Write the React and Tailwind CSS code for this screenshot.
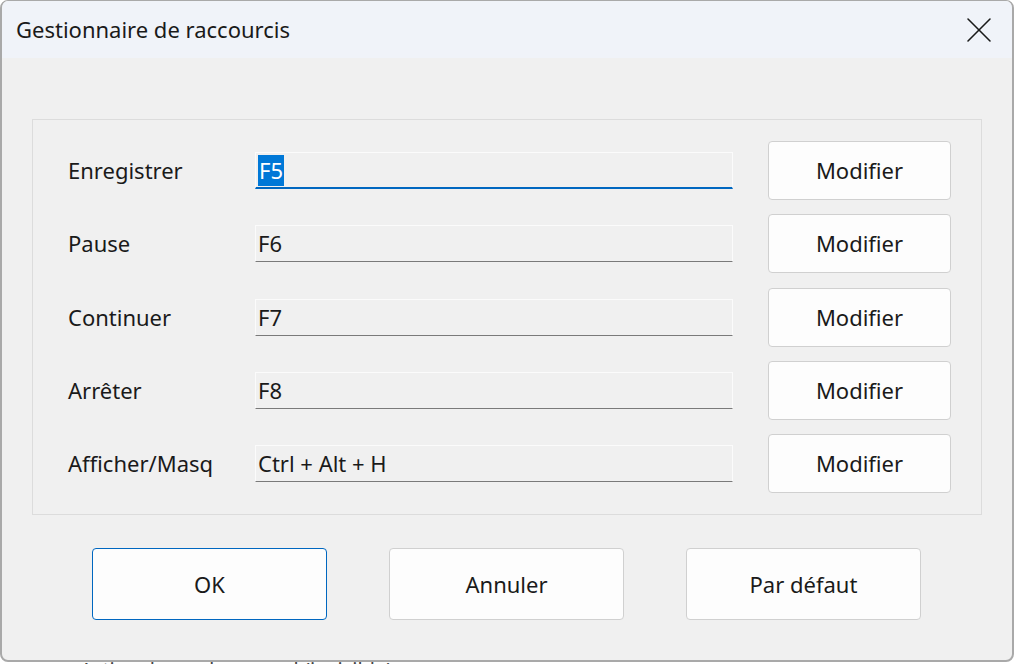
import { X } from "lucide-react";

const shortcuts = [
  { label: "Enregistrer", keys: "F5", focused: true },
  { label: "Pause", keys: "F6" },
  { label: "Continuer", keys: "F7" },
  { label: "Arrêter", keys: "F8" },
  { label: "Afficher/Masq", keys: "Ctrl + Alt + H" },
];

function ShortcutRow({ label, keys, focused }) {
  return (
    <div className="flex items-center h-[59px]">
      <div className="w-[222px] pl-[35px] text-[22px] text-[#1a1a1a]">{label}</div>
      <div
        className={
          "w-[478px] h-[37px] flex items-center pl-[2px] border border-[#fbfbfb] " +
          (focused ? "border-b-2 border-b-[#0067c0]" : "border-b-[#7a7a7a]")
        }
      >
        {focused ? (
          <span className="bg-[#0078d7] text-white text-[22px] leading-[31px] px-[1px]">{keys}</span>
        ) : (
          <span className="text-[22px] text-[#1a1a1a]">{keys}</span>
        )}
      </div>
      <button className="ml-[35px] w-[183px] h-[59px] rounded-[4px] border border-[#d0d0d0] bg-[#fdfdfd] text-[22px] text-[#1a1a1a]">
        Modifier
      </button>
    </div>
  );
}

export default function App() {
  return (
    <div
      className="w-[1014px] h-[664px] bg-white overflow-hidden relative"
      style={{ fontFamily: '"Noto Sans", "Open Sans", sans-serif' }}
    >
      <div className="h-[662px] rounded-[8px] border-x-2 border-t border-b-2 border-[#a9a9a9] bg-[#f0f0f0] flex flex-col overflow-hidden">
        {/* barre de titre */}
        <div className="h-[57px] bg-[#f0f3f9] flex items-center justify-between pl-[14px] pr-[11px]">
          <span className="text-[22px] text-[#1a1a1a]">Gestionnaire de raccourcis</span>
          <X size={44} strokeWidth={0.85} className="text-[#1a1a1a]" />
        </div>

        <div className="px-[30px] pt-[61px]">
          <div className="border border-[#dcdcdc] pt-[21px] pb-[21px] flex flex-col gap-[14.3px]">
            {shortcuts.map((s) => (
              <ShortcutRow key={s.label} {...s} />
            ))}
          </div>

          <div className="flex gap-[62px] pl-[60px] mt-[33px]">
            <button className="w-[235px] h-[72px] rounded-[4px] border border-[#0067c0] bg-[#fdfdfd] text-[22px] text-[#1a1a1a]">
              OK
            </button>
            <button className="w-[235px] h-[72px] rounded-[4px] border border-[#d0d0d0] bg-[#fdfdfd] text-[22px] text-[#1a1a1a]">
              Annuler
            </button>
            <button className="w-[235px] h-[72px] rounded-[4px] border border-[#d0d0d0] bg-[#fdfdfd] text-[22px] text-[#1a1a1a]">
              Par défaut
            </button>
          </div>
        </div>
      </div>
      <div className="h-[2px] overflow-hidden pl-[80px]">
        <div className="text-[20px] leading-[20px] text-[#444] -mt-[2px]">Activer le mode normal (invisible)</div>
      </div>
    </div>
  );
}
